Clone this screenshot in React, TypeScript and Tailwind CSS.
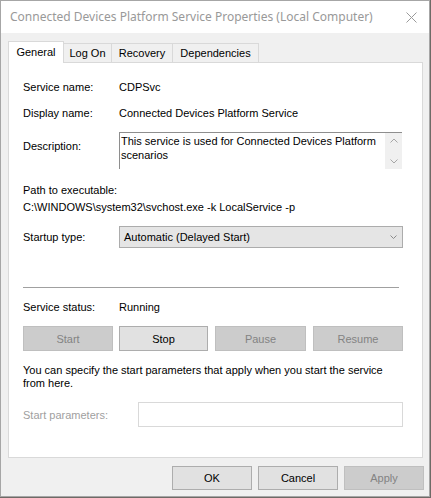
import React from "react";

const body = { fontFamily: '"Liberation Sans", Arial, sans-serif' };

function Btn({ label, w, disabled, ml }: { label: string; w: string; disabled?: boolean; ml?: string }) {
  return (
    <div
      className={`${w} ${ml ?? ""} h-full flex items-center justify-center border ${
        disabled ? "bg-[#cccccc] border-[#bfbfbf] text-[#838383]" : "bg-[#e1e1e1] border-[#adadad] text-black"
      }`}
    >
      {label}
    </div>
  );
}

export default function App() {
  return (
    <div className="w-[431px] h-[498px] bg-[#6e6a66] text-[11px] leading-[14px]" style={body}>
      <div className="w-[430px] h-[497px] border border-[#a6a6a6] bg-[#f0f0f0] flex flex-col">
        {/* Title bar */}
        <div className="h-[32px] bg-white flex items-center pl-[9px] pr-[11px] shrink-0">
          <div
            className="flex-1 text-[#999999] text-[12px] leading-[16px]"
            style={{ fontFamily: '"Noto Sans", "Open Sans", sans-serif' }}
          >
            Connected Devices Platform Service Properties (Local Computer)
          </div>
          <svg width="11" height="11" viewBox="0 0 11 11" className="mr-[1px]">
            <path d="M0.5 0.5 L10.5 10.5 M10.5 0.5 L0.5 10.5" stroke="#9a9a9a" strokeWidth="1" fill="none" />
          </svg>
        </div>

        {/* Body */}
        <div className="flex-1 flex flex-col pt-[8px] pl-[7px]">
          {/* Tabs */}
          <div className="flex items-end h-[21px] text-black">
            <div className="relative z-10 w-[56px] h-[22px] -mb-px bg-white border-l border-t border-r border-[#d9d9d9] flex items-center justify-center pb-[2px]">
              General
            </div>
            <div className="-ml-px w-[49px] h-[19px] bg-[#f0f0f0] border-l border-t border-r border-[#d9d9d9] flex items-center justify-center">
              Log On
            </div>
            <div className="-ml-px w-[62px] h-[19px] bg-[#f0f0f0] border-l border-t border-r border-[#d9d9d9] flex items-center justify-center">
              Recovery
            </div>
            <div className="-ml-px w-[87px] h-[19px] bg-[#f0f0f0] border-l border-t border-r border-[#d9d9d9] flex items-center justify-center">
              Dependencies
            </div>
          </div>

          {/* Panel */}
          <div className="w-[415px] h-[396px] bg-white border border-[#d9d9d9] pl-[14px] flex flex-col text-black">
            <div className="flex mt-[17px]">
              <div className="w-[96px]">Service name:</div>
              <div>CDPSvc</div>
            </div>
            <div className="flex mt-[12px]">
              <div className="w-[96px]">Display name:</div>
              <div>Connected Devices Platform Service</div>
            </div>
            <div className="flex mt-[12px]">
              <div className="w-[96px] pt-[7px]">Description:</div>
              <div className="w-[283px] h-[37px] border-t border-l border-[#8e8e8e] flex">
                <div className="flex-1 pl-[1px] pt-[1px] leading-[14px]">
                  This service is used for Connected Devices Platform
                  <br />
                  scenarios
                </div>
                <div className="w-[17px] bg-[#f0f0f0] flex flex-col items-center justify-between py-[5px]">
                  <svg width="8" height="5" viewBox="0 0 8 5">
                    <path d="M0.5 4.5 L4 1 L7.5 4.5" stroke="#a6a6a6" strokeWidth="1" fill="none" />
                  </svg>
                  <svg width="8" height="5" viewBox="0 0 8 5">
                    <path d="M0.5 0.5 L4 4 L7.5 0.5" stroke="#a6a6a6" strokeWidth="1" fill="none" />
                  </svg>
                </div>
              </div>
            </div>
            <div className="mt-[14px]">Path to executable:</div>
            <div className="mt-[3px]">C:\WINDOWS\system32\svchost.exe -k LocalService -p</div>
            <div className="flex items-center mt-[12px]">
              <div className="w-[96px]">Startup type:</div>
              <div className="w-[284px] h-[22px] bg-[#e5e5e5] border border-[#acacac] flex items-center pl-[4px] pr-[5px]">
                <div className="flex-1">Automatic (Delayed Start)</div>
                <svg width="7" height="4" viewBox="0 0 7 4">
                  <path d="M0.5 0.5 L3.5 3.5 L6.5 0.5" stroke="#8a8a8a" strokeWidth="1" fill="none" />
                </svg>
              </div>
            </div>
            <div className="mt-[39px] w-[376px] h-[2px] border-t border-[#a0a0a0] border-b border-b-white"></div>
            <div className="flex mt-[11px]">
              <div className="w-[96px]">Service status:</div>
              <div>Running</div>
            </div>
            <div className="flex h-[25px] mt-[12px]">
              <Btn label="Start" w="w-[90px]" disabled />
              <Btn label="Stop" w="w-[89px]" ml="ml-[6px]" />
              <Btn label="Pause" w="w-[91px]" ml="ml-[7px]" disabled />
              <Btn label="Resume" w="w-[90px]" ml="ml-[7px]" disabled />
            </div>
            <div className="mt-[13px] leading-[13px]">
              You can specify the start parameters that apply when you start the service
              <br />
              from here.
            </div>
            <div className="flex items-center mt-[12px]">
              <div className="w-[115px] text-[#a0a0a0]">Start parameters:</div>
              <div className="w-[265px] h-[25px] bg-white border border-[#d9d9d9]"></div>
            </div>
          </div>

          {/* Footer */}
          <div className="flex justify-end h-[24px] mt-[8px] pr-[5px]">
            <Btn label="OK" w="w-[80px]" />
            <Btn label="Cancel" w="w-[80px]" ml="ml-[6px]" />
            <Btn label="Apply" w="w-[80px]" ml="ml-[6px]" disabled />
          </div>
        </div>
      </div>
    </div>
  );
}
